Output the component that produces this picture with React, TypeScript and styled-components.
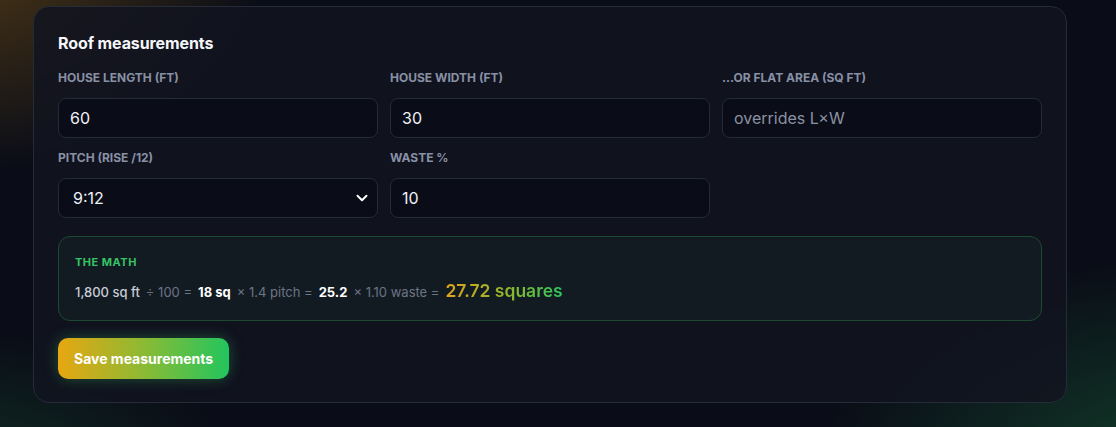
import React, { useState } from 'react'
import styled, { createGlobalStyle } from 'styled-components'

const GlobalStyle = createGlobalStyle`
  html, body {
    margin: 0;
    padding: 0;
    height: 100%;
  }
  body {
    font-family: Inter, 'Noto Sans', 'Liberation Sans', sans-serif;
    color: #e6e9f0;
    background-color: #0a0d17;
    background-image:
      radial-gradient(ellipse 440px 300px at -40px -40px, rgba(180, 120, 20, 0.38), transparent 70%),
      radial-gradient(ellipse 520px 300px at 1180px 470px, rgba(34, 160, 80, 0.32), transparent 70%),
      radial-gradient(ellipse 420px 200px at -60px 470px, rgba(34, 140, 70, 0.24), transparent 70%);
    overflow: hidden;
  }
`

const Page = styled.div`
  min-height: 427px;
  padding: 6px 49px 0 33px;
  box-sizing: border-box;
`

const Card = styled.section`
  box-sizing: border-box;
  width: 1034px;
  padding: 24px 24px 23px;
  background: rgba(17, 20, 32, 0.86);
  border: 1px solid #262b38;
  border-radius: 16px;
  display: flex;
  flex-direction: column;
`

const Title = styled.h2`
  margin: 3px 0 17px;
  font-size: 16px;
  line-height: 19px;
  font-weight: 700;
  letter-spacing: -0.1px;
  color: #f4f6fa;
`

const FieldGrid = styled.div`
  display: grid;
  grid-template-columns: repeat(3, 1fr);
  column-gap: 12px;
  row-gap: 12px;
`

const Field = styled.label`
  display: flex;
  flex-direction: column;
  gap: 12px;
`

const Label = styled.span`
  font-size: 12px;
  font-weight: 700;
  letter-spacing: 0;
  text-transform: uppercase;
  color: #8890a4;
  line-height: 16px;
`

const TextInput = styled.input`
  box-sizing: border-box;
  width: 100%;
  height: 40px;
  padding: 0 11px;
  background: #0a0d17;
  border: 1px solid #252a37;
  border-radius: 8px;
  color: #eef1f6;
  font-family: inherit;
  font-size: 16px;
  outline: none;
  &::placeholder {
    color: #8a91a3;
  }
`

const SelectWrap = styled.div`
  position: relative;
  display: flex;
`

const Select = styled.select`
  box-sizing: border-box;
  width: 100%;
  height: 40px;
  padding: 0 14px;
  appearance: none;
  background: #0a0d17;
  border: 1px solid #252a37;
  border-radius: 8px;
  color: #eef1f6;
  font-family: inherit;
  font-size: 16px;
  outline: none;
`

const Chevron = styled.svg`
  position: absolute;
  right: 7px;
  top: 50%;
  transform: translateY(-50%);
  pointer-events: none;
`

const MathBox = styled.div`
  margin-top: 18px;
  padding: 18px 16px 17px;
  border: 1px solid #1c4a31;
  border-radius: 12px;
  background: rgba(30, 60, 50, 0.22);
  display: flex;
  flex-direction: column;
  gap: 11px;
`

const MathLabel = styled.span`
  font-size: 11px;
  line-height: 14px;
  font-weight: 700;
  letter-spacing: 0.5px;
  color: #35c464;
  text-transform: uppercase;
`

const Equation = styled.div`
  display: flex;
  align-items: baseline;
  gap: 6px;
  font-size: 13px;
  line-height: 22px;
`

const Term = styled.span<{ strong?: boolean }>`
  color: ${({ strong }) => (strong ? '#ffffff' : '#c7ccd7')};
  font-weight: ${({ strong }) => (strong ? 700 : 500)};
  font-size: 13px;
`

const Op = styled.span`
  color: #6c7486;
  font-size: 13px;
`

const Result = styled.span`
  font-size: 17.5px;
  font-weight: 600;
  background: linear-gradient(90deg, #e0a31a 0%, #8cb82e 55%, #2dc55a 100%);
  -webkit-background-clip: text;
  background-clip: text;
  color: transparent;
`

const SaveButton = styled.button`
  align-self: flex-start;
  margin-top: 17px;
  height: 41px;
  padding: 0 16px;
  border: none;
  border-radius: 10px;
  background: linear-gradient(90deg, #e7a711 0%, #8cba34 50%, #22c55e 100%);
  box-shadow: 0 0 14px rgba(60, 200, 100, 0.35);
  color: #ffffff;
  font-family: inherit;
  font-size: 14px;
  font-weight: 700;
  cursor: pointer;
`

export default function App() {
  const [length, setLength] = useState('60')
  const [width, setWidth] = useState('30')
  const [area, setArea] = useState('')
  const [pitch, setPitch] = useState('9')
  const [waste, setWaste] = useState('10')

  return (
    <>
      <GlobalStyle />
      <Page>
        <Card>
          <Title>Roof measurements</Title>
          <FieldGrid>
            <Field>
              <Label>House length (ft)</Label>
              <TextInput value={length} onChange={(e) => setLength(e.target.value)} />
            </Field>
            <Field>
              <Label>House width (ft)</Label>
              <TextInput value={width} onChange={(e) => setWidth(e.target.value)} />
            </Field>
            <Field>
              <Label>...or flat area (sq ft)</Label>
              <TextInput placeholder="overrides L×W" value={area} onChange={(e) => setArea(e.target.value)} />
            </Field>
            <Field>
              <Label>Pitch (rise /12)</Label>
              <SelectWrap>
                <Select value={pitch} onChange={(e) => setPitch(e.target.value)}>
                  {[4, 5, 6, 7, 8, 9, 10, 12].map((p) => (
                    <option key={p} value={String(p)}>{`${p}:12`}</option>
                  ))}
                </Select>
                <Chevron width="18" height="18" viewBox="0 0 24 24" fill="none" stroke="#ffffff" strokeWidth="2.6" strokeLinecap="round" strokeLinejoin="round">
                  <path d="M6 9l6 6 6-6" />
                </Chevron>
              </SelectWrap>
            </Field>
            <Field>
              <Label>Waste %</Label>
              <TextInput value={waste} onChange={(e) => setWaste(e.target.value)} />
            </Field>
          </FieldGrid>
          <MathBox>
            <MathLabel>The math</MathLabel>
            <Equation>
              <Term>1,800 sq ft</Term>
              <Op>÷ 100 =</Op>
              <Term strong>18 sq</Term>
              <Op>× 1.4 pitch =</Op>
              <Term strong>25.2</Term>
              <Op>× 1.10 waste =</Op>
              <Result>27.72 squares</Result>
            </Equation>
          </MathBox>
          <SaveButton>Save measurements</SaveButton>
        </Card>
      </Page>
    </>
  )
}
